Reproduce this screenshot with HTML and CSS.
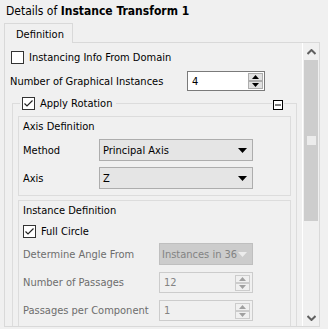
FILE: index.html
```html
<!DOCTYPE html>
<html lang="en">
<head>
    <meta charset="UTF-8">
    <title>Details of Instance Transform 1</title>
    <link rel="stylesheet" href="styles.css">
</head>
<body>
    <div class="title">Details of <b>Instance Transform 1</b></div>

    <div class="tabs">
        <div class="tab">Definition</div>
    </div>

    <div class="panel">
        <div class="content">
            <div class="check-row">
                <span class="check"></span>
                <span>Instancing Info From Domain</span>
            </div>

            <div class="field-row first">
                <span class="label">Number of Graphical Instances</span>
                <div class="spin">
                    <span class="spin-value">4</span>
                    <span class="spin-btns">
                        <span class="spin-btn"><svg width="7" height="4" viewBox="0 0 7 4"><path d="M0 4 L3.5 0 L7 4 Z" fill="#000"/></svg></span>
                        <span class="spin-btn"><svg width="7" height="4" viewBox="0 0 7 4"><path d="M0 0 L7 0 L3.5 4 Z" fill="#000"/></svg></span>
                    </span>
                </div>
            </div>

            <div class="group">
                <div class="group-head">
                    <span class="group-title">
                        <span class="check checked">
                            <svg width="11" height="11" viewBox="0 0 11 11"><path d="M1.5 5.5 L4 8 L9.5 2.5" fill="none" stroke="#222" stroke-width="1.2"/></svg>
                        </span>
                        <span>Apply Rotation</span>
                    </span>
                    <span class="collapse">
                        <svg width="10" height="10" viewBox="0 0 10 10"><rect x="0.5" y="0.5" width="9" height="9" fill="#fff" stroke="#000"/><path d="M2 5 H8" stroke="#000"/></svg>
                    </span>
                </div>

                <div class="box axis-box">
                    <div class="box-title">Axis Definition</div>
                    <div class="field-row">
                        <span class="label short">Method</span>
                        <div class="combo">
                            <span>Principal Axis</span>
                            <svg width="9" height="5" viewBox="0 0 9 5"><path d="M0 0 H9 L4.5 5 Z" fill="#000"/></svg>
                        </div>
                    </div>
                    <div class="field-row">
                        <span class="label short">Axis</span>
                        <div class="combo">
                            <span>Z</span>
                            <svg width="9" height="5" viewBox="0 0 9 5"><path d="M0 0 H9 L4.5 5 Z" fill="#000"/></svg>
                        </div>
                    </div>
                </div>

                <div class="box instance-box">
                    <div class="box-title">Instance Definition</div>
                    <div class="check-row inner">
                        <span class="check checked">
                            <svg width="11" height="11" viewBox="0 0 11 11"><path d="M1.5 5.5 L4 8 L9.5 2.5" fill="none" stroke="#222" stroke-width="1.2"/></svg>
                        </span>
                        <span>Full Circle</span>
                    </div>
                    <div class="field-row disabled">
                        <span class="label wide">Determine Angle From</span>
                        <div class="combo small">
                            <span class="combo-text">Instances in 360</span>
                            <svg width="9" height="5" viewBox="0 0 9 5"><path d="M0 0 H9 L4.5 5 Z" fill="#ececec"/></svg>
                        </div>
                    </div>
                    <div class="field-row disabled">
                        <span class="label wide">Number of Passages</span>
                        <div class="spin small">
                            <span class="spin-value">12</span>
                            <span class="spin-btns">
                                <span class="spin-btn"><svg width="7" height="4" viewBox="0 0 7 4"><path d="M0 4 L3.5 0 L7 4 Z" fill="#a0a0a0"/></svg></span>
                                <span class="spin-btn"><svg width="7" height="4" viewBox="0 0 7 4"><path d="M0 0 L7 0 L3.5 4 Z" fill="#a0a0a0"/></svg></span>
                            </span>
                        </div>
                    </div>
                    <div class="field-row disabled">
                        <span class="label wide">Passages per Component</span>
                        <div class="spin small">
                            <span class="spin-value">1</span>
                            <span class="spin-btns">
                                <span class="spin-btn"><svg width="7" height="4" viewBox="0 0 7 4"><path d="M0 4 L3.5 0 L7 4 Z" fill="#a0a0a0"/></svg></span>
                                <span class="spin-btn"><svg width="7" height="4" viewBox="0 0 7 4"><path d="M0 0 L7 0 L3.5 4 Z" fill="#a0a0a0"/></svg></span>
                            </span>
                        </div>
                    </div>
                </div>
            </div>
        </div>

        <div class="scrollbar">
            <div class="scroll-arrow">
                <svg width="9" height="6" viewBox="0 0 9 6"><path d="M0.5 5 L4.5 1 L8.5 5" fill="none" stroke="#606060" stroke-width="2"/></svg>
            </div>
            <div class="scroll-thumb"><span class="grip"></span></div>
            <div class="scroll-track"></div>
            <div class="scroll-arrow">
                <svg width="9" height="6" viewBox="0 0 9 6"><path d="M0.5 1 L4.5 5 L8.5 1" fill="none" stroke="#606060" stroke-width="2"/></svg>
            </div>
        </div>
    </div>
</body>
</html>
```

FILE: styles.css
```css
* {
    margin: 0;
    padding: 0;
    box-sizing: border-box;
}

body {
    font-family: Tahoma, "DejaVu Sans Condensed", "DejaVu Sans", sans-serif;
    font-size: 11px;
    color: #000;
    background: #f0f0f0;
    width: 328px;
    height: 329px;
    overflow: hidden;
}

.title {
    font-size: 12px;
    height: 22px;
    line-height: 14px;
    padding: 4px 0 0 6px;
}

.tabs {
    display: flex;
    padding-left: 4px;
    height: 20px;
}

.tab {
    width: 69px;
    border: 1px solid #d9d9d9;
    border-bottom: none;
    background: #f0f0f0;
    padding: 4px 0 0 11px;
    font-size: 11px;
    position: relative;
    top: 1px;
}

.panel {
    display: flex;
    margin-left: 4px;
    width: 316px;
    height: 285px;
    border: 1px solid #d9d9d9;
    background: #f0f0f0;
}

.content {
    flex: 1;
    overflow: hidden;
    padding-left: 6px;
}

.check-row {
    display: flex;
    align-items: center;
    gap: 5px;
    height: 13px;
    margin-top: 8px;
}

.check {
    width: 13px;
    height: 13px;
    border: 1px solid #333;
    background: #fff;
    display: flex;
    align-items: center;
    justify-content: center;
    flex-shrink: 0;
}

.field-row {
    display: flex;
    align-items: center;
    margin-top: 6px;
}

.field-row.first {
    margin-top: 7px;
    margin-left: -1px;
}

.label {
    width: 177px;
}

.label.short {
    width: 76px;
}

.label.wide {
    width: 136px;
}

.spin {
    display: flex;
    align-items: center;
    justify-content: space-between;
    width: 78px;
    height: 20px;
    border: 1px solid #7a7a7a;
    background: #fff;
    padding: 0 1px 0 4px;
}

.spin-btns {
    display: flex;
    flex-direction: column;
}

.spin-btn {
    width: 15px;
    height: 8px;
    border: 1px solid #adadad;
    background: #e1e1e1;
    display: flex;
    align-items: center;
    justify-content: center;
}

.spin.small {
    width: 94px;
    height: 21px;
    border-color: #cccccc;
    background: #f0f0f0;
    padding-right: 2px;
}

.spin.small .spin-btn {
    border-color: #cccccc;
    background: #f0f0f0;
}

.group {
    margin: 12px 0 0 1px;
    width: 285px;
    height: 240px;
    border: 1px solid #dcdcdc;
    border-bottom: none;
    padding: 0 5px;
}

.group-head {
    display: flex;
    justify-content: space-between;
    align-items: center;
    height: 13px;
    margin-top: -7px;
    padding: 0 7px 0 2px;
}

.group-title {
    display: flex;
    align-items: center;
    gap: 5px;
    background: #f0f0f0;
    padding: 0 4px 0 2px;
}

.collapse {
    display: flex;
    background: #f0f0f0;
    padding: 0 1px;
    margin-top: 3px;
}

.box {
    border: 1px solid #dcdcdc;
    padding: 3px 4px 6px 4px;
}

.axis-box {
    margin-top: 6px;
}

.instance-box {
    margin-top: 4px;
    height: 140px;
}

.box-title {
    height: 13px;
    line-height: 13px;
}

.combo {
    display: flex;
    align-items: center;
    justify-content: space-between;
    width: 154px;
    height: 22px;
    border: 1px solid #adadad;
    background: #e5e5e5;
    padding: 0 5px 0 3px;
}

.combo.small {
    width: 94px;
    border-color: #bfbfbf;
    background: #cccccc;
    color: #838383;
    padding-left: 2px;
}

.combo-text {
    width: 75px;
    overflow: hidden;
    white-space: nowrap;
}

.check-row.inner {
    margin-top: 8px;
}

.disabled {
    color: #6d6d6d;
}

.disabled .spin-value {
    color: #838383;
}

.field-row.disabled + .field-row.disabled {
    margin-top: 7px;
}

.check-row.inner + .field-row {
    margin-top: 5px;
}

.scrollbar {
    width: 17px;
    display: flex;
    flex-direction: column;
    border-left: 1px solid #fff;
    background: #f0f0f0;
}

.scroll-arrow {
    height: 17px;
    display: flex;
    align-items: center;
    justify-content: center;
}

.scroll-thumb {
    height: 161px;
    margin: 0 1px;
    background: #cdcdcd;
    display: flex;
    align-items: center;
    justify-content: center;
}

.grip {
    width: 9px;
    height: 9px;
    background: #ececec;
}

.scroll-track {
    flex: 1;
}
```
